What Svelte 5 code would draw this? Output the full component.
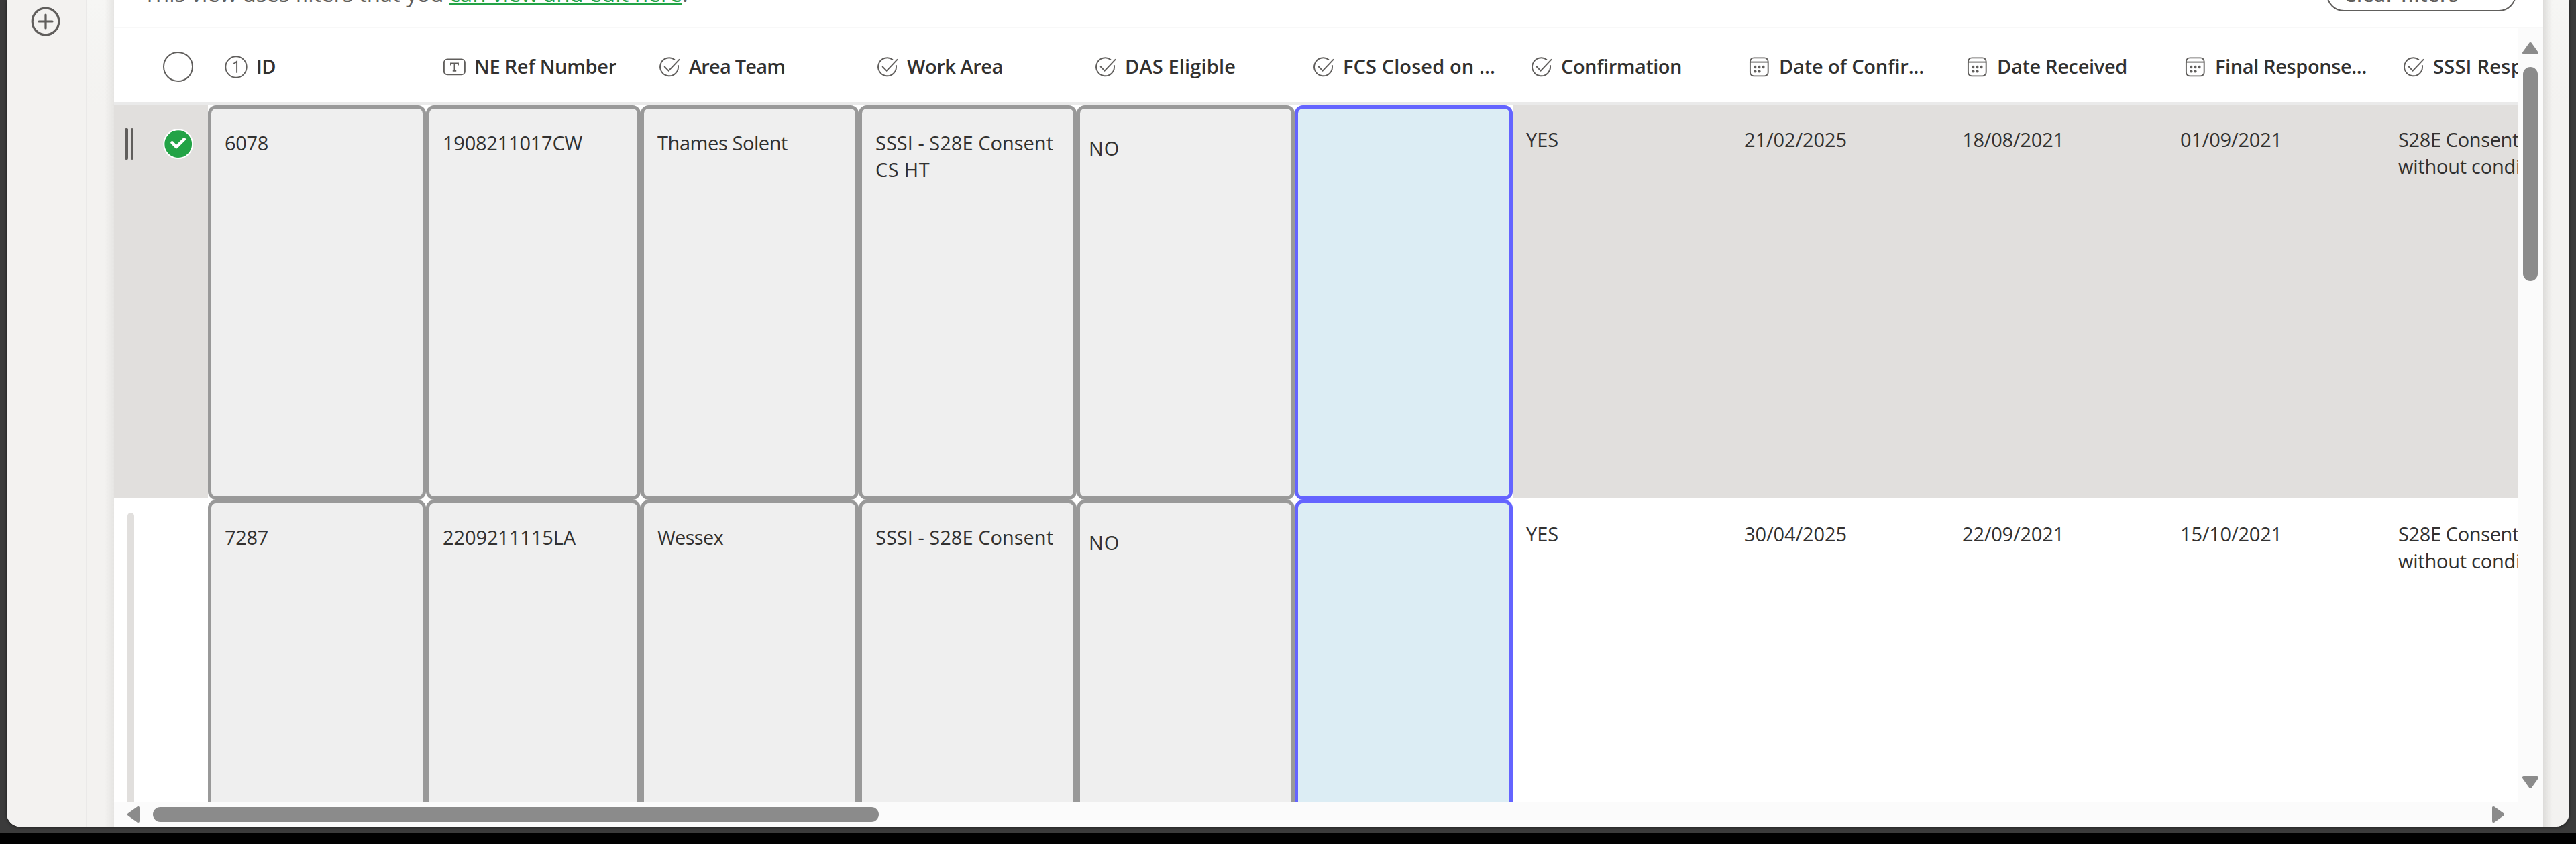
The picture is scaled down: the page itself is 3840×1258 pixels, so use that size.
<script>
  // Stretches or tightens tracking so a label fills its measured width.
  function fit(node, width) {
    if (!width) return;
    const natural = node.getBoundingClientRect().width;
    const count = node.textContent.length;
    node.style.letterSpacing = `${(width - natural) / count}px`;
  }

  const columns = [
    { label: 'ID', icon: 'number', width: 325, text: 29 },
    { label: 'NE Ref Number', icon: 'text', width: 320, text: 212 },
    { label: 'Area Team', icon: 'choice', width: 325, text: 143 },
    { label: 'Work Area', icon: 'choice', width: 325, text: 143 },
    { label: 'DAS Eligible', icon: 'choice', width: 325, text: 165 },
    { label: 'FCS Closed on ...', icon: 'choice', width: 325, text: 227 },
    { label: 'Confirmation', icon: 'choice', width: 325, text: 180 },
    { label: 'Date of Confir...', icon: 'date', width: 325, text: 216 },
    { label: 'Date Received', icon: 'date', width: 325, text: 194 },
    { label: 'Final Response...', icon: 'date', width: 325, text: 226 },
    { label: 'SSSI Resp', icon: 'choice', width: 325, text: 134 },
  ];

  const rows = [
    {
      selected: true,
      cells: [
        [['6078', 65]],
        [['1908211017CW', 208]],
        [['Thames Solent', 194]],
        [['SSSI - S28E Consent', 265], ['CS HT', 81]],
        [['NO', 46]],
        [],
        [['YES', 48]],
        [['21/02/2025', 153]],
        [['18/08/2021', 152]],
        [['01/09/2021', 152]],
        [['S28E Consent', 180], ['without condi', 182]],
      ],
    },
    {
      selected: false,
      cells: [
        [['7287', 65]],
        [['2209211115LA', 198]],
        [['Wessex', 98]],
        [['SSSI - S28E Consent', 265]],
        [['NO', 46]],
        [],
        [['YES', 48]],
        [['30/04/2025', 153]],
        [['22/09/2021', 152]],
        [['15/10/2021', 152]],
        [['S28E Consent', 180], ['without condi', 182]],
      ],
    },
  ];

  function cellClass(index) {
    if (index < 4) return 'boxed';
    if (index === 4) return 'boxed choice';
    if (index === 5) return 'boxed editing';
    return 'plain';
  }
</script>

<div class="desktop">
  <div class="window">
    <nav class="rail">
      <svg class="add" viewBox="0 0 44 44" width="44" height="44">
        <circle cx="22" cy="22" r="19.8" />
        <path d="M22 12v20M12 22h20" />
      </svg>
    </nav>
    <div class="gutter"></div>

    <main class="panel">
      <div class="notice">
        <p class="message">
          <span class="fit" use:fit={456}>This view uses filters that you&nbsp;</span><a class="fit" href="#filters" use:fit={347}>can view and edit here</a><span>.</span>
        </p>
        <button class="clear"><span class="fit" use:fit={171}>Clear filters</span></button>
      </div>

      <div class="body">
        <div class="grid">
          <div class="header">
            <div class="select"><span class="ring"></span></div>
            {#each columns as column}
              <div class="heading" style:width="{column.width}px">
                <span class="icon">
                  {#if column.icon === 'number'}
                    <svg viewBox="0 0 36 36" width="36" height="36">
                      <circle cx="18" cy="18" r="15.7" />
                      <path d="M14.2 12.8c2-.6 3.6-1.6 4.9-3.2v17.2" />
                    </svg>
                  {:else if column.icon === 'text'}
                    <svg viewBox="0 0 36 36" width="36" height="36">
                      <rect x="2.9" y="6.4" width="31" height="23" rx="5" />
                      <path d="M13 15.4v-2.9h11v2.9M18.5 12.5v11.4M15.8 23.9h5.4" />
                    </svg>
                  {:else if column.icon === 'choice'}
                    <svg viewBox="0 0 36 36" width="36" height="36">
                      <path d="M26.9 7.2A13.5 13.5 0 1 0 31.8 15.2" />
                      <path d="M11.2 17l6.5 6.7L34 6.4" />
                    </svg>
                  {:else}
                    <svg viewBox="0 0 36 36" width="36" height="36">
                      <rect x="4.9" y="4.4" width="26.8" height="27" rx="5.5" />
                      <path d="M5 10.6h26.6" />
                      <g class="dots">
                        <circle cx="12.2" cy="18" r="2.2" /><circle cx="18.3" cy="18" r="2.2" /><circle cx="24.4" cy="18" r="2.2" />
                        <circle cx="12.2" cy="24.2" r="2.2" /><circle cx="18.3" cy="24.2" r="2.2" />
                      </g>
                    </svg>
                  {/if}
                </span>
                <span class="fit" use:fit={column.text}>{column.label}</span>
              </div>
            {/each}
          </div>

          {#each rows as row}
            <div class="row" class:selected={row.selected}>
              <div class="select">
                {#if row.selected}
                  <span class="handle"><i></i><i></i></span>
                  <svg class="tick" viewBox="0 0 46 46" width="46" height="46">
                    <circle cx="22.7" cy="22.6" r="21.4" />
                    <path d="M13.6 20.4l6.3 6.6L31.6 15.4" />
                  </svg>
                {:else}
                  <span class="bar"></span>
                {/if}
              </div>
              {#each row.cells as lines, index}
                <div class="cell {cellClass(index)}" style:width="{columns[index].width}px">
                  <div class="content">
                    {#each lines as [text, width]}
                      <div class="line"><span class="fit" use:fit={width}>{text}</span></div>
                    {/each}
                  </div>
                </div>
              {/each}
            </div>
          {/each}
        </div>

        <div class="vbar">
          <svg viewBox="0 0 24 18" width="24" height="18"><path d="M12 2L22 16H2Z" /></svg>
          <span class="vthumb"></span>
          <svg class="end" viewBox="0 0 24 18" width="24" height="18"><path d="M2 2H22L12 16Z" /></svg>
        </div>
      </div>

      <div class="hbar">
        <svg viewBox="0 0 18 24" width="18" height="24"><path d="M2 12L16 2V22Z" /></svg>
        <span class="hthumb"></span>
        <svg class="end" viewBox="0 0 18 24" width="18" height="24"><path d="M16 12L2 2V22Z" /></svg>
      </div>
    </main>
    <div class="gutter right"></div>
  </div>
</div>

<style>
  :global(body) {
    margin: 0;
    background: #000;
  }

  .desktop {
    box-sizing: border-box;
    width: 3840px;
    height: 1242px;
    padding: 0 10px 10px;
    background: #3b3b3b;
    color: #323130;
    font-family: 'Open Sans', 'Noto Sans', sans-serif;
    font-size: 29px;
    overflow: hidden;
  }

  .window {
    display: flex;
    height: 1232px;
    border-radius: 0 0 20px 20px;
    background: linear-gradient(#f6f6f4, #f3f2f0 160px);
    box-shadow: 0 1px 4px #1c1c1c;
    overflow: hidden;
  }

  .rail {
    box-sizing: border-box;
    width: 120px;
    padding: 10px 0 0 36px;
    border-right: 2px solid #eae9e8;
    background: #f3f2f0;
  }

  .add {
    display: block;
    fill: none;
    stroke: #605e5c;
    stroke-width: 3.2;
    stroke-linecap: round;
  }

  .gutter {
    width: 40px;
    background: linear-gradient(90deg, transparent 65%, #e6e5e3);
  }

  .gutter.right {
    width: 39px;
    background: linear-gradient(270deg, transparent 65%, #dddcda);
  }

  .panel {
    display: flex;
    flex-direction: column;
    width: 3621px;
    background: #fff;
  }

  .fit {
    display: inline-block;
    white-space: pre;
  }

  .notice {
    box-sizing: border-box;
    display: flex;
    align-items: flex-end;
    justify-content: space-between;
    height: 42px;
    padding: 0 40px 25px 44px;
    border-bottom: 2px solid #f8f8f8;
  }

  .message {
    height: 44px;
    margin: 0 0 2px;
    color: #605e5c;
    font-size: 33px;
    line-height: 44px;
    white-space: nowrap;
  }

  .message a {
    color: #23a346;
    text-decoration: underline;
    text-decoration-thickness: 3px;
    text-underline-offset: 2px;
    text-decoration-skip-ink: none;
  }

  .clear {
    box-sizing: border-box;
    flex: none;
    width: 283px;
    height: 64px;
    margin-bottom: -2px;
    padding: 13px 0 0 24px;
    border: 2px solid #605e5c;
    border-radius: 26px;
    background: #fff;
    color: #605e5c;
    font: 600 29px/40px 'Open Sans', sans-serif;
    text-align: left;
  }

  .body {
    display: flex;
    height: 1153px;
  }

  .grid {
    width: 3583px;
    height: 1153px;
    overflow: hidden;
  }

  .header {
    box-sizing: border-box;
    display: flex;
    width: 3800px;
    height: 115px;
    border-bottom: 5px solid #eaeaea;
  }

  .select {
    box-sizing: border-box;
    display: flex;
    flex: none;
    align-items: flex-start;
    width: 140px;
  }

  .ring {
    box-sizing: border-box;
    width: 45px;
    height: 45px;
    margin: 35px 0 0 73px;
    border: 2px solid #605e5c;
    border-radius: 50%;
  }

  .heading {
    display: flex;
    flex: none;
    align-items: center;
    height: 112px;
    font-weight: 600;
    white-space: nowrap;
  }

  .icon {
    display: block;
    flex: none;
    height: 36px;
    margin: 3px 12px 0 24px;
  }

  .icon svg {
    display: block;
    fill: none;
    stroke: #605e5c;
    stroke-width: 1.9;
  }

  .icon .dots {
    fill: #605e5c;
    stroke: none;
  }

  .row {
    display: flex;
    width: 3800px;
    height: 588px;
    background: #fff;
  }

  .row.selected {
    background: linear-gradient(#e1dfdd 586px, #fff 586px);
  }

  .handle {
    display: flex;
    gap: 4px;
    margin: 34px 0 0 16px;
  }

  .handle i {
    width: 4.5px;
    height: 47px;
    border-radius: 2px;
    background: #605e5c;
  }

  .tick {
    margin: 35px 0 0 44px;
    fill: #23a346;
    stroke: #fff;
    stroke-width: 2;
  }

  .tick path {
    fill: none;
    stroke-width: 4.6;
    stroke-linecap: round;
    stroke-linejoin: round;
  }

  .bar {
    width: 10px;
    height: 600px;
    margin: 19px 0 0 20px;
    border-radius: 5px;
    background: #e1dfdd;
  }

  .cell {
    box-sizing: border-box;
    flex: none;
    height: 588px;
    line-height: 40px;
  }

  .cell.boxed {
    background: #fff;
  }

  .cell.boxed .content {
    box-sizing: border-box;
    height: 588px;
    padding: 31px 0 0 20px;
    border: 5px solid #999;
    border-radius: 12px;
    background: #efefef;
  }

  .cell.boxed.choice .content {
    padding: 39px 0 0 13px;
  }

  .cell.boxed.editing .content {
    border-color: #6464ff;
    background: #dcedf4;
  }

  .cell.plain .content {
    padding: 31px 0 0 20px;
  }

  .line {
    height: 40px;
    white-space: nowrap;
  }

  .vbar,
  .hbar {
    display: flex;
    align-items: center;
    background: #fbfbfb;
    fill: #8b8b8b;
    stroke: #8b8b8b;
    stroke-width: 4;
    stroke-linejoin: round;
  }

  .vbar {
    box-sizing: border-box;
    flex-direction: column;
    width: 38px;
    padding: 21px 0 20px;
  }

  .vthumb {
    width: 22px;
    height: 319px;
    margin-top: 19px;
    border-radius: 11px;
    background: #8b8b8b;
  }

  .vbar .end {
    margin-top: auto;
  }

  .hbar {
    box-sizing: border-box;
    height: 37px;
    padding: 0 58px 0 20px;
  }

  .hthumb {
    width: 1082px;
    height: 22px;
    margin-left: 20px;
    border-radius: 11px;
    background: #8b8b8b;
  }

  .hbar .end {
    margin-left: auto;
  }
</style>
